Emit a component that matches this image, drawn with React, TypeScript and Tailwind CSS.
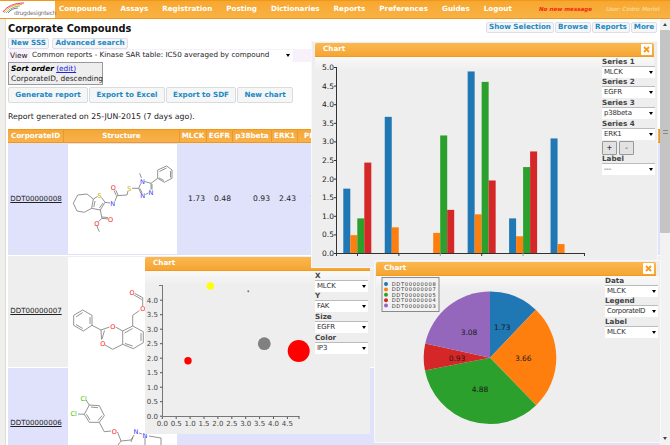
import React from "react";

const FONT = "[font-family:'DejaVu_Sans',Verdana,sans-serif]";

function Sel({ v, narrow }: { v: string; narrow?: boolean }) {
  return (
    <div className="flex h-[12px] w-[53px] items-center justify-between border-t border-[#bbb] bg-white pl-[2px] pr-[2px] text-[7px] leading-none text-[#333]">
      <span className={narrow ? "whitespace-nowrap tracking-[-0.4px]" : "tracking-[-0.2px]"}>{v}</span>
      <span className="h-0 w-0 shrink-0 border-x-[2.5px] border-t-[3px] border-x-transparent border-t-black" />
    </div>
  );
}

function Lab({ t }: { t: string }) {
  return <div className="mt-[0.5px] h-[7.2px] text-[7.2px] font-bold leading-[7px] text-[#444]">{t}</div>;
}

function TopBtn({ t, w }: { t: string; w: string }) {
  return (
    <span className={`flex h-[11px] items-center justify-center whitespace-nowrap rounded-[2px] border border-[#dde] bg-[#f6f6f6] text-[7.2px] font-bold text-[#1c8ac4] ${w}`}>
      {t}
    </span>
  );
}

function ActBtn({ t, w }: { t: string; w: string }) {
  return (
    <span className={`flex h-[16px] items-center justify-center whitespace-nowrap rounded-[2px] border border-[#d5dde0] bg-[#f6f6f6] text-[7.2px] font-bold text-[#1c8ac4] ${w}`}>
      {t}
    </span>
  );
}

function Close() {
  return (
    <span className="flex h-[11px] w-[11px] items-center justify-center rounded-[1px] bg-white">
      <svg width="7" height="7" viewBox="0 0 7 7">
        <path d="M1 1L6 6M6 1L1 6" stroke="#f59a1c" strokeWidth="1.8" />
      </svg>
    </span>
  );
}

function TitleBar({ close = true }: { close?: boolean }) {
  return (
    <div className="flex h-[14px] items-center justify-between rounded-t-[2px] border-b border-[#f09a1e] bg-gradient-to-b from-[#fab84e] to-[#f5a533] pl-[8px] pr-[2px] text-[7.2px] font-bold text-white">
      <span>Chart</span>
      {close && <Close />}
    </div>
  );
}

const SERIES = ["#1f77b4", "#ff7f0e", "#2ca02c", "#d62728"];
const BARS = [
  [1.73, 0.48, 0.93, 2.43],
  [3.66, 0.69, 0, 0],
  [0, 0.54, 3.16, 1.16],
  [4.88, 1.04, 4.6, 1.95],
  [0.93, 0.45, 2.31, 2.73],
  [3.08, 0.24, 0, 0],
];

function BarChart() {
  const x0 = 336 - 312;
  const y0 = 253 - 42;
  const k = 37.2;
  const ticks = [0, 0.5, 1, 1.5, 2, 2.5, 3, 3.5, 4, 4.5, 5];
  return (
    <svg width="285" height="225" viewBox="0 0 285 225" className="shrink-0">
      {BARS.map((g, i) =>
        g.map((v, j) =>
          v > 0 ? (
            <rect key={`${i}-${j}`} x={31.3 + i * 41.45 + j * 7} y={y0 - v * k} width={7} height={v * k} fill={SERIES[j]} />
          ) : null,
        ),
      )}
      <path d={`M${x0 + 0.5} 25V${y0 + 3}M${x0} ${y0 + 0.5}H273`} stroke="#333" fill="none" />
      {ticks.map((t) => (
        <g key={t}>
          <path d={`M${x0 - 2} ${y0 - t * k + 0.5}H${x0}`} stroke="#333" />
          <text x={x0 - 2} y={y0 - t * k + 3} textAnchor="end" fontSize="7.5" fill="#222">
            {t.toFixed(1)}
          </text>
        </g>
      ))}
      {[0, 1, 2, 3, 4, 5].map((i) => (
        <path key={i} d={`M${i === 0 ? x0 + 0.5 : 45.5 + (i - 1) * 41.4} ${y0}v3`} stroke={i === 3 || i === 5 ? "#999" : "#333"} />
      ))}
      <path d={`M272.5 ${y0}v3`} stroke="#333" />
    </svg>
  );
}

function Scatter() {
  const x = (v: number) => 17.3 + v * 27.8;
  const y = (v: number) => 158.7 - v * 29;
  const vals = [0, 0.5, 1, 1.5, 2, 2.5, 3, 3.5, 4, 4.5];
  return (
    <svg width="168" height="177" viewBox="0 0 168 177" className="shrink-0">
      <path d="M17.5 28V159.5H154" stroke="#777" strokeWidth="1" fill="none" />
      <path d="M14 28.5H17.5" stroke="#777" />
      {vals.slice(0, 9).map((v) => (
        <g key={v}>
          <path d={`M15 ${y(v) + 0.5}h2.5`} stroke="#555" />
          <text x="13" y={y(v) + 3} textAnchor="end" fontSize="7" fill="#444">
            {v.toFixed(1)}
          </text>
        </g>
      ))}
      {vals.map((v) => (
        <g key={`x${v}`}>
          <path d={`M${x(v)} 160v2`} stroke="#555" />
          <text x={x(v)} y="169" textAnchor="middle" fontSize="7" fill="#444">
            {v.toFixed(1)}
          </text>
        </g>
      ))}
      <path d="M154 159v3" stroke="#555" />
      <circle cx="65.3" cy="29" r="3.7" fill="#ffff00" />
      <circle cx="103.3" cy="34.3" r="1" fill="#777" />
      <circle cx="119.3" cy="86.7" r="6.4" fill="#808080" />
      <circle cx="153.7" cy="94" r="11" fill="#ff0000" />
      <circle cx="43" cy="103.7" r="3.7" fill="#ff0000" />
    </svg>
  );
}

function Pie() {
  const vals = [1.73, 3.66, 4.88, 0.93, 3.08];
  const cols = ["#1f77b4", "#ff7f0e", "#2ca02c", "#d62728", "#9467bd"];
  const cx = 114;
  const cy = 81.7;
  const r = 66.3;
  const total = vals.reduce((a, b) => a + b, 0);
  let acc = 0;
  const paths = vals.map((v, i) => {
    const a0 = (acc / total) * Math.PI * 2;
    acc += v;
    const a1 = (acc / total) * Math.PI * 2;
    const large = a1 - a0 > Math.PI ? 1 : 0;
    return (
      <path
        key={i}
        d={`M${cx} ${cy}L${cx + r * Math.sin(a0)} ${cy - r * Math.cos(a0)}A${r} ${r} 0 ${large} 1 ${cx + r * Math.sin(a1)} ${cy - r * Math.cos(a1)}Z`}
        fill={cols[i]}
      />
    );
  });
  const labels: [string, number, number][] = [
    ["1.73", 126.3, 51],
    ["3.66", 147.3, 81.7],
    ["4.88", 104, 113.3],
    ["0.93", 81, 81.7],
    ["3.08", 93, 56.3],
  ];
  const names = ["DDT00000008", "DDT00000007", "DDT00000005", "DDT00000004", "DDT00000003"];
  return (
    <svg width="226" height="166" viewBox="0 0 226 166" className="shrink-0">
      {paths}
      {labels.map(([t, a, b]) => (
        <text key={t} x={a} y={b + 3} textAnchor="middle" fontSize="7.5" fill="#1a1a1a">
          {t}
        </text>
      ))}
      <rect x="6" y="1.5" width="57" height="34" fill="#f2f2f2" stroke="#8a8a8a" strokeWidth="1" />
      {names.map((n, i) => (
        <g key={n}>
          <circle cx="10" cy={8 + i * 5.4} r="2" fill={cols[i]} />
          <text x="15.7" y={10 + i * 5.4} fontSize="5.2" fill="#333" textLength="44">
            {n}
          </text>
        </g>
      ))}
    </svg>
  );
}

const M = { stroke: "#777", strokeWidth: 0.8, fill: "none" };
function Atom({ x, y, t, c }: { x: number; y: number; t: string; c: string }) {
  return (
    <text x={x} y={y + 2.5} textAnchor="middle" fontSize="6.5" fill={c}>
      {t}
    </text>
  );
}

function Mol1() {
  return (
    <svg width="109" height="110" viewBox="67 144 109 110" className="block">
      <path {...M} d="M92.3 199L86 194L76.7 195L72.3 203.3L76 211L83.3 212.3L90.7 208.3Z" />
      <path {...M} d="M92.3 199L96.5 196.5M100.5 197.5L104 202.3L99.3 210L90.7 208.3M94 201L92.8 207M102 203L98.4 208" />
      <path {...M} d="M104 202.3L109 203M114 201L116 195.7L126 195L127 191M115.3 195.5L113 190.5M117 195L114.7 190M131 188.3H137.7L139.5 184M137.7 188.3L139.9 193.5M139 188.5L141 193M143.5 181.5L150 183.3L150 189.5M151 184L151 189.5M147.5 193L144.5 194.5M140.4 178L138.7 173.3" />
      <path {...M} d="M150 183.3L156.7 178.3L156.7 170L165.7 166L171 170L171 178.3L163.3 182.3L156.7 178.3M158.5 171.5L165.5 168M169.5 171V177.5M162.8 180.5L158 177.8" />
      <path {...M} d="M99.3 210L101 218.3L107 219M101.2 217L107 217.6M101 218.3L97.5 221.5M95.7 225.5L98.3 231.7" />
      <Atom x={98.5} y={195} t="S" c="#c8b400" />
      <Atom x={111.8} y={203} t="N" c="#3a3aff" />
      <Atom x={112.3} y={187.7} t="O" c="#ff2020" />
      <Atom x={128.3} y={188.3} t="S" c="#c8b400" />
      <Atom x={141.4} y={181} t="N" c="#3a3aff" />
      <Atom x={150} y={192.5} t="N" c="#3a3aff" />
      <Atom x={141.7} y={195} t="N" c="#3a3aff" />
      <Atom x={109.5} y={219.3} t="O" c="#ff2020" />
      <Atom x={95.7} y={223.3} t="O" c="#ff2020" />
    </svg>
  );
}

function Mol2() {
  return (
    <svg width="109" height="110" viewBox="67 256 109 110" className="block">
      <path {...M} d="M72.7 314.3L81.7 309L91 314.3V324.3L82.3 330L72.7 324.3ZM75 316L81.7 311.5M89 316V323M81.8 327.5L75 323.5M91 324.3L100 329L108.5 326M100 329L100.5 338.5M103.5 329.5L101 338" />
      <path {...M} d="M114.5 326L121.7 330L131.7 325L142.3 330.7V341.7L132.3 347.7L121.7 343.3V330M123.7 332L131.5 327.5M140 332V340M131.7 345L124 342.5M121.7 343.3L111.7 348.3L104 344" />
      <path {...M} d="M131.7 325V314.3L138.5 309.5M141.7 305L141.7 296.7L134 292.5M140.7 298.5L133 294" />
      <Atom x={111.7} y={325} t="O" c="#ff2020" />
      <Atom x={101.7} y={342.3} t="O" c="#ff2020" />
      <Atom x={141.7} y={307.7} t="O" c="#ff2020" />
      <Atom x={131} y={291} t="O" c="#ff2020" />
    </svg>
  );
}

function Mol3() {
  return (
    <svg width="109" height="77" viewBox="67 368 109 77" className="block">
      <path {...M} d="M88.3 405L98.3 405.7L103.3 415.7L98.3 422.3H88.3L83.3 414.3ZM90 407L97 407.7M101 415.7L97 420.5M89 420L85.5 414.3M88.3 405L85 400M83.3 414.3L77 414M98.3 422.3L103.3 431.7L110 431M116.5 432L120 441L130 440L133 435M130 442L132 437M138 433L141 434M120 441L117 445M144 437V445M148 436L160 438V445" />
      <Atom x={82.7} y={398} t="Cl" c="#3fc600" />
      <Atom x={72.7} y={413.7} t="Cl" c="#3fc600" />
      <Atom x={113.3} y={431} t="O" c="#ff2020" />
      <Atom x={135} y={431.7} t="N" c="#3a3aff" />
      <Atom x={144} y={435} t="N" c="#3a3aff" />
    </svg>
  );
}

const COLS = "grid-cols-[56px_116px_27px_26px_39px_26px_26px_1fr]";

function Row({ id, bg, values, mol, h, top }: { id: string; bg: string; values: string[]; mol: React.ReactNode; h: string; top?: boolean }) {
  return (
    <div className={`grid ${COLS} ${h} ${bg} mb-[1px] text-[7.6px] text-[#222]`}>
      <div className="flex items-center justify-center text-[7.1px] underline">{id}</div>
      <div className={`flex justify-center ${top ? "items-start" : "items-center"}`}>
        <div className="bg-white">{mol}</div>
      </div>
      {values.map((v, i) => (
        <div key={i} className="flex items-center justify-end whitespace-nowrap pr-[2px]">{v}</div>
      ))}
      <div />
    </div>
  );
}

export default function App() {
  return (
    <div className={`relative flex h-[445px] w-[670px] flex-col overflow-hidden bg-white ${FONT}`}>
      {/* nav */}
      <div className="flex h-[19px] shrink-0 items-center whitespace-nowrap border-y border-[#f0971c] bg-gradient-to-b from-[#f7a72f] to-[#f8b244] text-[7.2px] font-bold text-white">
        <div className="flex h-[17px] w-[55px] shrink-0 items-center bg-white">
          <div className="relative h-[15px] w-[55px]">
            <svg width="24" height="11" viewBox="0 0 24 11" className="absolute left-[1px] top-[0px]">
              <path d="M2 10C6 4 14 1 23 1" stroke="#e8367a" fill="none" />
              <path d="M3 11C7 5 14 2 21 2.5" stroke="#f5a623" fill="none" />
              <path d="M5 11C8 7 14 4 19 4" stroke="#7ac143" fill="none" />
              <path d="M7 11C9 8 13 6 17 6" stroke="#8e5fd0" fill="none" />
            </svg>
            <span className="absolute bottom-0 left-[14px] text-[6px] font-normal leading-[8px] tracking-[-0.35px] text-[#777]">drugdesigntech</span>
          </div>
        </div>
        <div className="ml-[4px] flex shrink-0 gap-[14px]">
          <span>Compounds</span>
          <span>Assays</span>
          <span>Registration</span>
          <span>Posting</span>
          <span>Dictionaries</span>
          <span>Reports</span>
          <span>Preferences</span>
          <span>Guides</span>
          <span>Logout</span>
        </div>
        <span className="ml-[27px] shrink-0 text-[5.6px] italic text-[#f02a10]">No new message</span>
        <span className="ml-[14px] shrink-0 text-[5.6px] font-normal italic text-[#fde3b8]">User: Cédric Merlot</span>
      </div>

      <div className="flex min-h-0 flex-1">
        {/* left strip */}
        <div className="w-[6px] shrink-0 border-r border-[#ddd] bg-[#f1efec]" />
        <div className="min-w-0 flex-1 pl-[2px]">
          <div className="flex h-[17px] items-start justify-between pr-[3px]">
            <div className="pt-[5px] text-[9.8px] font-bold leading-[10px] text-[#111]">Corporate Compounds</div>
            <div className="mt-[3px] flex gap-[1px]">
              <TopBtn t="Show Selection" w="w-[68px]" />
              <TopBtn t="Browse" w="w-[36px]" />
              <TopBtn t="Reports" w="w-[38px]" />
              <TopBtn t="More" w="w-[26px]" />
            </div>
          </div>
          <div className="mt-[2px] flex gap-[3px]">
            <TopBtn t="New SSS" w="w-[41px]" />
            <TopBtn t="Advanced search" w="w-[76px]" />
          </div>
          <div className="flex h-[13px] w-[340px] items-center bg-[#f8f0fa] pl-[2px] text-[7.4px] text-[#222]">
            <span className="w-[20px]">View</span>
            <div className="flex h-[12px] w-[263px] items-center justify-between bg-white pl-[2px] pr-[3px] text-[7.2px]">
              <span className="whitespace-nowrap">Common reports - Kinase SAR table: IC50 averaged by compound</span>
              <span className="h-0 w-0 shrink-0 border-x-[2.5px] border-t-[3px] border-x-transparent border-t-black" />
            </div>
          </div>
          <div className="h-[23px] w-[95px] whitespace-nowrap border border-[#999] bg-[#eee] px-[2px] py-[1px] text-[7.4px] leading-[10px] text-[#222]">
            <div><b className="italic text-black">Sort order</b> <span className="text-[#2222dd] underline">(edit)</span></div>
            <div>CorporateID, descending</div>
          </div>
          <div className="mt-[2px] flex gap-[1px]">
            <ActBtn t="Generate report" w="w-[80px]" />
            <ActBtn t="Export to Excel" w="w-[76px]" />
            <ActBtn t="Export to SDF" w="w-[70px]" />
            <ActBtn t="New chart" w="w-[56px]" />
          </div>
          <div className="mt-[9px] h-[10px] text-[7.8px] leading-[10px] text-[#222]">Report generated on 25-JUN-2015 (7 days ago).</div>
          <div className={`mt-[7px] grid ${COLS} h-[14px] items-center border-y border-[#f0971c] bg-gradient-to-b from-[#f5a738] to-[#f8b24a] text-[7.2px] font-bold text-white`}>
            {["CorporateID", "Structure", "MLCK", "EGFR", "p38beta", "ERK1", "PIP", "FAK"].map((h) => (
              <span key={h} className="flex h-full items-center justify-center border-r border-[#e89a2c]">{h}</span>
            ))}
          </div>
          <Row id="DDT00000008" bg="bg-[#e0e1fb]" h="h-[112px]" values={["1.73", "0.48", "0.93", "2.43", "1.9"]} mol={<Mol1 />} />
          <Row id="DDT00000007" bg="bg-[#eeeeee]" h="h-[111px]" values={["3.66", "0.69", "", "", "1.4"]} mol={<Mol2 />} />
          <Row id="DDT00000006" bg="bg-[#e0e1fb]" h="h-[111px]" top values={["", "", "", "", ""]} mol={<Mol3 />} />
        </div>
        {/* scrollbar */}
        <div className="flex w-[10px] shrink-0 flex-col bg-[#f2f2f2] text-[#333]">
          <div className="flex h-[11px] items-center justify-center">
            <span className="h-0 w-0 border-x-[2.5px] border-b-[3px] border-x-transparent border-b-[#444]" />
          </div>
          <div className="flex h-[203px] items-center justify-center rounded-[1px] bg-[#c4c4c4]">
            <span className="h-[4px] w-[5px] border-y border-[#888]" />
          </div>
          <div className="flex-1" />
          <div className="flex h-[14px] items-center justify-center">
            <span className="h-0 w-0 border-x-[2.5px] border-t-[3px] border-x-transparent border-t-[#444]" />
          </div>
        </div>
      </div>

      {/* Scatter window */}
      <div className="absolute left-[145px] top-[257px] h-[177px] w-[225px] bg-[#eeeeee]">
        <TitleBar close={false} />
        <div className="flex bg-[linear-gradient(#f9f9f9,#eeeeee_14px)]">
          <div className="-mt-[14px]"><Scatter /></div>
          <div className="ml-[2px] flex flex-col">
            <Lab t="X" /><div className="mt-[1px]"><Sel v="MLCK" /></div>
            <Lab t="Y" /><div className="mt-[1px]"><Sel v="FAK" /></div>
            <Lab t="Size" /><div className="mt-[1px]"><Sel v="EGFR" /></div>
            <Lab t="Color" /><div className="mt-[1px]"><Sel v="IP3" /></div>
          </div>
        </div>
      </div>

      {/* Bar window */}
      <div className="absolute left-[312px] top-[42px] h-[225px] w-[345px] bg-[#eeeeee] px-[3px] pt-[1px] shadow-[0_0_0_1px_#f8f8f8]">
        <TitleBar />
        <div className="flex bg-[linear-gradient(#f9f9f9,#eeeeee_14px)]">
          <div className="-ml-[3px] -mt-[15px]"><BarChart /></div>
          <div className="ml-[5px] flex flex-col">
            <Lab t="Series 1" /><div className="mt-[1px]"><Sel v="MLCK" /></div>
            <Lab t="Series 2" /><div className="mt-[1px]"><Sel v="EGFR" /></div>
            <Lab t="Series 3" /><div className="mt-[1px]"><Sel v="p38beta" /></div>
            <Lab t="Series 4" /><div className="mt-[1px]"><Sel v="ERK1" /></div>
            <div className="mt-[1px] flex gap-[2px]">
              <span className="flex h-[14px] w-[15px] items-center justify-center rounded-[1px] border border-[#999] bg-[#e2e2e2] text-[7px]">+</span>
              <span className="flex h-[14px] w-[15px] items-center justify-center rounded-[1px] border border-[#999] bg-[#e2e2e2] text-[7px]">-</span>
            </div>
            <Lab t="Label" /><div className="mt-[1px]"><Sel v="---" /></div>
          </div>
        </div>
      </div>

      {/* Pie window */}
      <div className="absolute left-[375px] top-[261px] h-[181px] w-[285px] bg-[#eeeeee] px-[1px] pt-[1px] shadow-[0_0_0_1px_#f8f8f8]">
        <div className="mr-[3px]"><TitleBar /></div>
        <div className="flex bg-[linear-gradient(#f9f9f9,#eeeeee_14px)]">
          <Pie />
          <div className="ml-[3px] flex flex-col">
            <Lab t="Data" /><div className="mt-[1px]"><Sel v="MLCK" /></div>
            <Lab t="Legend" /><div className="mt-[1px]"><Sel v="CorporateID" narrow /></div>
            <Lab t="Label" /><div className="mt-[1px]"><Sel v="MLCK" /></div>
          </div>
        </div>
      </div>
    </div>
  );
}
